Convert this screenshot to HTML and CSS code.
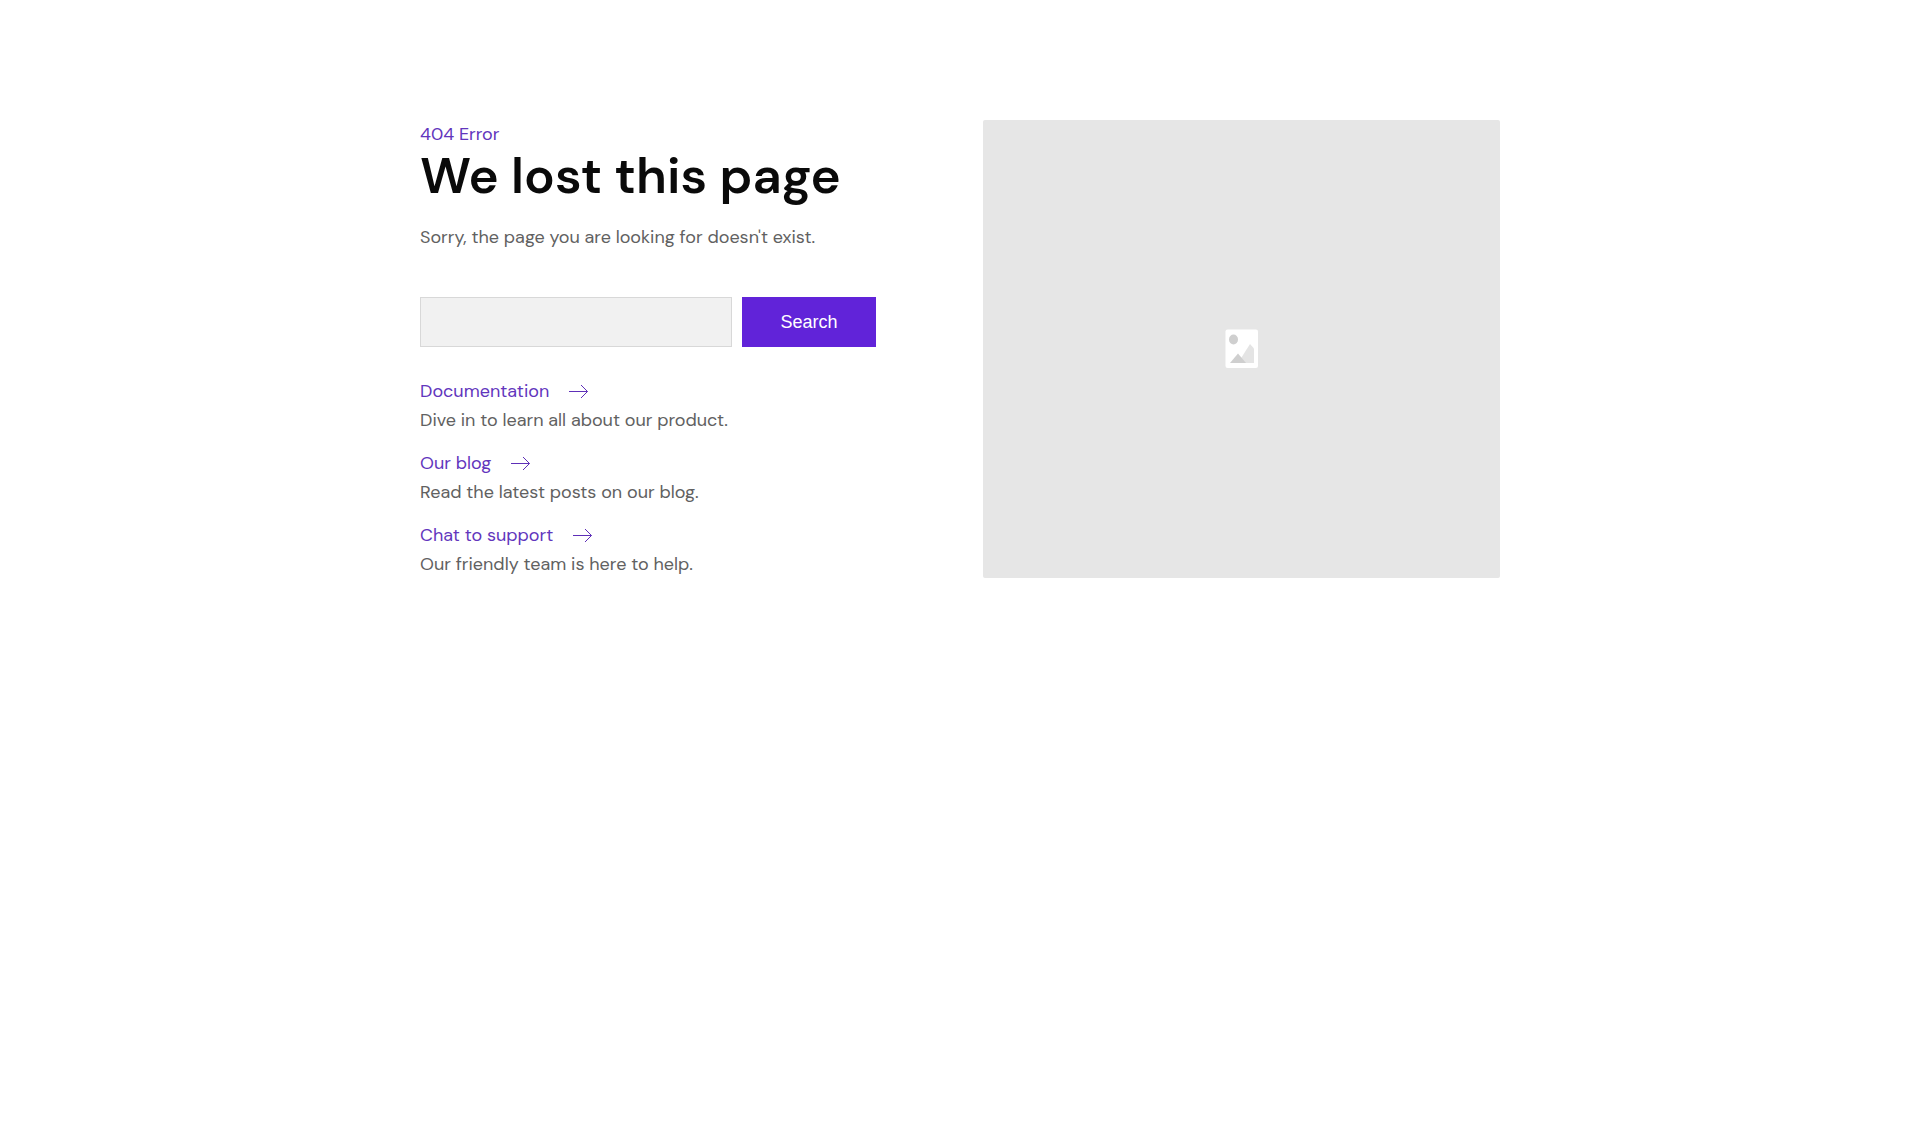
FILE: index.html
```html
<!DOCTYPE html>
<html lang="en">
<head>
  <meta charset="UTF-8">
  <meta name="viewport" content="width=device-width, initial-scale=1.0">
  <title>404 Error</title>
  <link rel="stylesheet" href="styles.css">
</head>
<body>

<main class="container">
  <section class="content">
    <p class="error">404 Error</p>
    <h1>We lost this page</h1>
    <p class="lead">Sorry, the page you are looking for doesn't exist.</p>

    <form class="search" action="#">
      <input type="text" name="q" aria-label="Search">
      <button type="submit">Search</button>
    </form>

    <ul class="links">
      <li>
        <a href="#">Documentation
          <svg class="arrow" viewBox="0 0 20 15"><path d="M0 7.5H18.5M12 1L18.5 7.5L12 14"/></svg>
        </a>
        <p>Dive in to learn all about our product.</p>
      </li>
      <li>
        <a href="#">Our blog
          <svg class="arrow" viewBox="0 0 20 15"><path d="M0 7.5H18.5M12 1L18.5 7.5L12 14"/></svg>
        </a>
        <p>Read the latest posts on our blog.</p>
      </li>
      <li>
        <a href="#">Chat to support
          <svg class="arrow" viewBox="0 0 20 15"><path d="M0 7.5H18.5M12 1L18.5 7.5L12 14"/></svg>
        </a>
        <p>Our friendly team is here to help.</p>
      </li>
    </ul>
  </section>

  <div class="picture">
    <svg class="placeholder" viewBox="0 0 34 40">
      <rect x="0.5" y="0.5" width="32.5" height="38.5" rx="2" fill="#fff"/>
      <ellipse cx="8.5" cy="10.5" rx="4.5" ry="5" fill="#cfcfcf"/>
      <path d="M13 34L25 15L29 19.5V34Z" fill="#e4e4e4"/>
      <path d="M5 34L13 24.5L21 34Z" fill="#cfcfcf"/>
    </svg>
  </div>
</main>

</body>
</html>
```
FILE: styles.css
```css
* { box-sizing: border-box; }
body {
  margin: 0;
  background: #fff;
  color: #616161;
  font-family: "DM Sans", Inter, sans-serif;
  font-size: 18px;
  line-height: 29px;
}
h1, p, ul { margin: 0; padding: 0; }

.container {
  display: flex;
  flex-wrap: wrap;
  justify-content: space-between;
  gap: 40px;
  max-width: 1120px;
  margin: 0 auto;
  padding: 120px 20px;
}
.content {
  flex: 1;
  min-width: 300px;
  max-width: 456px;
}
.error { color: #6236bd; }
h1 {
  margin-bottom: 20px;
  color: #0a0a0a;
  font-size: 51px;
  font-weight: 600;
  line-height: 54px;
}

.search {
  display: flex;
  gap: 10px;
  margin: 45px 0 30px;
}
.search input {
  flex: 1;
  min-width: 0;
  height: 50px;
  padding: 0 16px;
  border: 1px solid #d8d8d8;
  background: #f1f1f1;
  font-size: 18px;
}
.search button {
  width: 134px;
  border: 0;
  background: #6123d9;
  color: #fff;
  font-family: "Liberation Sans", Arial, sans-serif;
  font-size: 18px;
}

.links {
  display: flex;
  flex-direction: column;
  gap: 15px;
  list-style: none;
}
.links a {
  display: flex;
  align-items: center;
  gap: 20px;
  color: #6236bd;
  text-decoration: none;
}
.links p { line-height: 28px; }
.arrow {
  width: 20px;
  height: 15px;
  fill: none;
  stroke: #5e2fb8;
}

.picture {
  display: flex;
  flex: 1;
  align-items: center;
  justify-content: center;
  min-width: 300px;
  max-width: 517px;
  border-radius: 2px;
  background: #e6e6e6;
}
.placeholder { width: 34px; height: 40px; }
```
